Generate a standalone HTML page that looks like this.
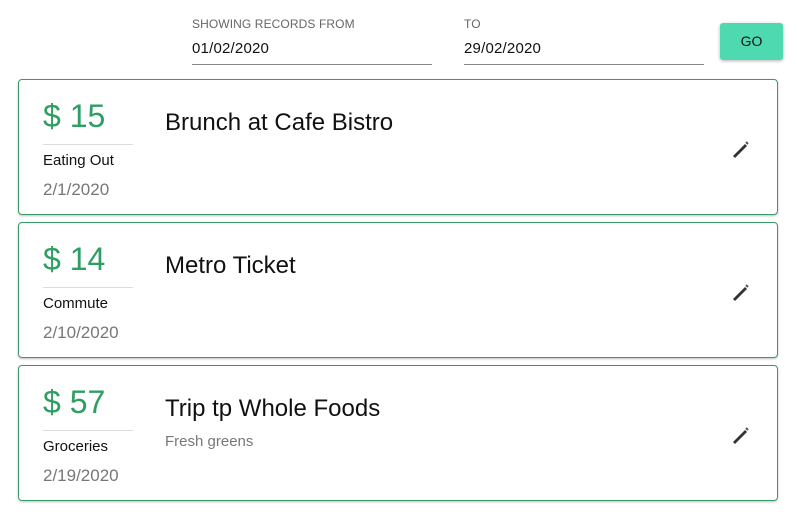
<!DOCTYPE html>
<html><head><style>
body{margin:0;width:797px;height:520px;background:#fff;font-family:"Liberation Sans",Arial,sans-serif;position:relative;overflow:hidden}
.lbl{position:absolute;top:17px;font-size:12px;color:#666;letter-spacing:0.1px}
.val{position:absolute;top:40px;font-size:15px;color:#111;letter-spacing:0.2px}
.ul{position:absolute;top:64px;height:1px;width:240px;background:#888}
.go{position:absolute;left:720px;top:23px;width:63px;height:37px;background:#4fd9b0;border-radius:3px;box-shadow:0 1px 3px rgba(0,0,0,.3);font-size:14px;color:#111;text-align:center;line-height:37px}
.card{position:absolute;left:18px;width:758px;height:134px;border:1px solid #3a9a6a;border-radius:4px;box-shadow:0 1px 2px rgba(0,0,0,.25)}
.amt{position:absolute;left:24px;top:18px;font-size:32px;color:#2e9e63}
.div{position:absolute;left:24px;top:64px;width:90px;height:1px;background:#ddd}
.cat{position:absolute;left:24px;top:72px;font-size:15px;color:#111}
.date{position:absolute;left:24px;top:100px;font-size:17px;color:#777}
.ttl{position:absolute;left:146px;top:29px;font-size:24px;color:#111}
.sub{position:absolute;left:146px;top:67px;font-size:15px;color:#777}
.pen{position:absolute;left:711px;top:59px}
</style></head><body>
<div class="lbl" style="left:192px">SHOWING RECORDS FROM</div>
<div class="val" style="left:192px">01/02/2020</div>
<div class="ul" style="left:192px"></div>
<div class="lbl" style="left:464px">TO</div>
<div class="val" style="left:464px">29/02/2020</div>
<div class="ul" style="left:464px"></div>
<div class="go">GO</div>

<div class="card" style="top:79px"><div class="amt">$ 15</div><div class="div"></div><div class="cat">Eating Out</div><div class="date">2/1/2020</div><div class="ttl">Brunch at Cafe Bistro</div>
<svg class="pen" width="20" height="20" viewBox="0 0 20 20"><path d="M3 17 L15 5 L17 7 L5 19 Z" fill="#333"/><path d="M16 3 l2 2" stroke="#555" stroke-width="2"/></svg></div>
<div class="card" style="top:222px"><div class="amt">$ 14</div><div class="div"></div><div class="cat">Commute</div><div class="date">2/10/2020</div><div class="ttl">Metro Ticket</div>
<svg class="pen" width="20" height="20" viewBox="0 0 20 20"><path d="M3 17 L15 5 L17 7 L5 19 Z" fill="#333"/><path d="M16 3 l2 2" stroke="#555" stroke-width="2"/></svg></div>
<div class="card" style="top:365px"><div class="amt">$ 57</div><div class="div"></div><div class="cat">Groceries</div><div class="date">2/19/2020</div><div class="ttl">Trip tp Whole Foods</div><div class="sub">Fresh greens</div>
<svg class="pen" width="20" height="20" viewBox="0 0 20 20"><path d="M3 17 L15 5 L17 7 L5 19 Z" fill="#333"/><path d="M16 3 l2 2" stroke="#555" stroke-width="2"/></svg></div>
</body></html>
